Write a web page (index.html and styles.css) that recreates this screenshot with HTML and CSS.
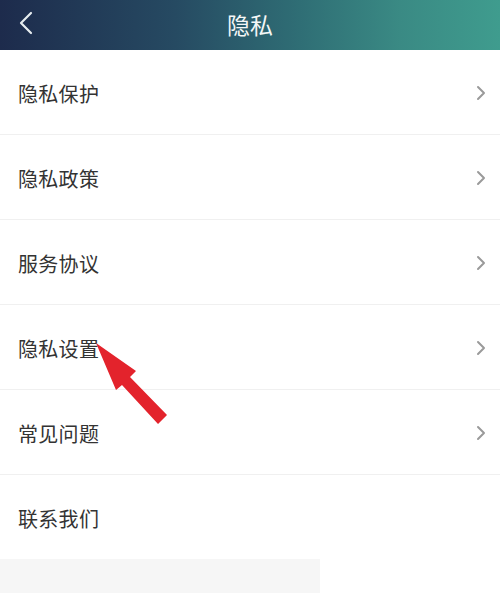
FILE: index.html
```html
<!DOCTYPE html>
<html lang="zh">
<head>
<meta charset="utf-8">
<link rel="stylesheet" href="styles.css">
</head>
<body>
<div class="page">
  <header class="topbar">
    <svg class="back" width="14" height="24" viewBox="0 0 14 24"><path d="M12 2 L2 12 L12 22" fill="none" stroke="#e6ecef" stroke-width="2.2" stroke-linecap="round" stroke-linejoin="round"/></svg>
    <h1 class="title">隐私</h1>
  </header>
  <ul class="list">
    <li class="row"><span class="label">隐私保护</span><svg class="chev" width="10" height="16" viewBox="0 0 10 16"><path d="M2 2 L8 8 L2 14" fill="none" stroke="#9a9a9a" stroke-width="2" stroke-linecap="round" stroke-linejoin="round"/></svg></li>
    <li class="row"><span class="label">隐私政策</span><svg class="chev" width="10" height="16" viewBox="0 0 10 16"><path d="M2 2 L8 8 L2 14" fill="none" stroke="#9a9a9a" stroke-width="2" stroke-linecap="round" stroke-linejoin="round"/></svg></li>
    <li class="row"><span class="label">服务协议</span><svg class="chev" width="10" height="16" viewBox="0 0 10 16"><path d="M2 2 L8 8 L2 14" fill="none" stroke="#9a9a9a" stroke-width="2" stroke-linecap="round" stroke-linejoin="round"/></svg></li>
    <li class="row marked"><span class="label">隐私设置</span><svg class="chev" width="10" height="16" viewBox="0 0 10 16"><path d="M2 2 L8 8 L2 14" fill="none" stroke="#9a9a9a" stroke-width="2" stroke-linecap="round" stroke-linejoin="round"/></svg>
      <svg class="pointer" width="80" height="90" viewBox="0 0 80 90"><polygon points="4,1 44,29 38,35 75,73 66,82 30,43 24,48" fill="#e3232c"/></svg>
    </li>
    <li class="row"><span class="label">常见问题</span><svg class="chev" width="10" height="16" viewBox="0 0 10 16"><path d="M2 2 L8 8 L2 14" fill="none" stroke="#9a9a9a" stroke-width="2" stroke-linecap="round" stroke-linejoin="round"/></svg></li>
    <li class="row last"><span class="label">联系我们</span></li>
  </ul>
  <div class="footer-strip"></div>
</div>
</body>
</html>
```

FILE: styles.css
```css
* { box-sizing: border-box; }
html, body { margin: 0; padding: 0; background: #ffffff; }
body {
  font-family: "Noto Sans CJK SC", "Noto Sans", sans-serif;
  width: 500px;
  height: 593px;
  overflow: hidden;
}
.page { display: flex; flex-direction: column; }
.topbar {
  height: 50px;
  position: relative;
  display: flex;
  align-items: center;
  justify-content: center;
  background: linear-gradient(90deg, #1d2b4c 0%, #264a62 35%, #2f6e75 60%, #3a8a84 80%, #3f9c8e 100%);
}
.back { position: absolute; left: 19px; top: 11px; }
.title {
  margin: 0;
  color: #f4f7f7;
  font-size: 23px;
  font-weight: 400;
  line-height: 1;
  margin-top: -2px;
}
.list { list-style: none; margin: 0; padding: 0; }
.row {
  height: 85px;
  display: flex;
  align-items: center;
  justify-content: space-between;
  padding: 2px 14px 0 18px;
  border-bottom: 1px solid #f0f0f0;
  position: relative;
}
.row.last { border-bottom: none; height: 84px; }
.label {
  font-size: 20px;
  color: #333333;
  letter-spacing: 0.3px;
}
.chev { display: block; }
.pointer { position: absolute; left: 92px; top: 37px; }
.footer-strip {
  width: 320px;
  height: 35px;
  background: #f6f6f6;
}
```
